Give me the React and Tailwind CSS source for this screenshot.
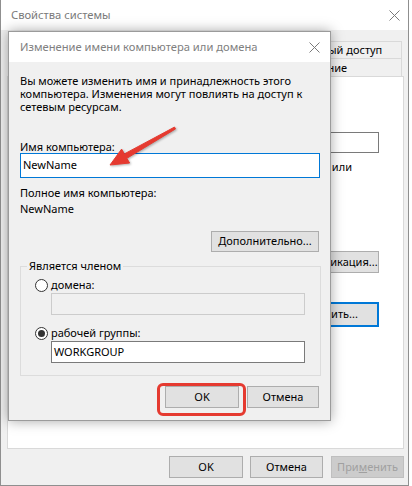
import React from "react";

function XIcon({ className = "" }) {
  return (
    <svg width="11" height="11" viewBox="0 0 11 11" className={className}>
      <path d="M0.5 0.5 L10.5 10.5 M10.5 0.5 L0.5 10.5" stroke="#7a7a7a" strokeWidth="1" fill="none" />
    </svg>
  );
}

function Btn({ className = "", children }) {
  return (
    <div className={"flex items-center justify-center border border-[#adadad] bg-[#e1e1e1] text-black whitespace-nowrap " + className}>
      {children}
    </div>
  );
}

export default function App() {
  return (
    <div className="relative w-[412px] h-[486px] bg-white overflow-hidden font-['Noto_Sans',sans-serif] text-[11px] text-black">
      {/* Outer window */}
      <div className="w-[409px] h-[486px] flex flex-col bg-[#f0f0f0] border-l border-r border-b border-[#8f8f8f]">
        <div className="h-[30px] shrink-0 bg-white flex items-center justify-between pl-[10px] pr-[8px]">
          <span className="text-[11.2px] text-[#7a7a7a] leading-[16px]">Свойства системы</span>
          <XIcon />
        </div>
        <div className="flex flex-col pl-[6px] pr-[4px] pt-[11px]">
          {/* tab rows */}
          <div className="flex justify-end pr-[2px]">
            <div className="w-[256px] h-[17px] border-t border-l border-[#d9d9d9]" />
            <div className="w-[138px] h-[17px] border-t border-l border-r border-[#d9d9d9] flex items-center justify-center leading-[16px]">Удаленный доступ</div>
          </div>
          <div className="flex justify-end pr-[2px]">
            <div className="w-[100px] h-[18px] border-t border-l border-[#d9d9d9]" />
            <div className="w-[106px] h-[18px] border-t border-l border-[#d9d9d9]" />
            <div className="w-[188px] h-[18px] border-t border-l border-r border-[#d9d9d9] flex items-center justify-center leading-[16px]">Оборудование</div>
          </div>
          {/* panel */}
          <div className="h-[373px] border border-[#d9d9d9] bg-white flex flex-col items-end pr-[24px]">
            <div className="mt-[55px] w-[240px] h-[21px] border border-[#7a7a7a]" />
            <div className="mt-[6px] mr-[27px] leading-[16px] whitespace-nowrap">Например: "Компьютер в гостиной" или</div>
            <Btn className="mt-[76px] w-[98px] h-[22px]">Идентификация...</Btn>
            <div className="mt-[29px] w-[104px] h-[25px] flex items-center justify-center border-2 border-[#0078d7] bg-[#e1e1e1]">Изменить...</div>
          </div>
          {/* bottom buttons */}
          <div className="mt-[7px] flex justify-end">
            <Btn className="w-[74px] h-[22px]">OK</Btn>
            <Btn className="ml-[7px] w-[73px] h-[22px]">Отмена</Btn>
            <div className="ml-[8px] w-[73px] h-[22px] flex items-center justify-center border border-[#bfbfbf] bg-[#cccccc] text-[#a0a0a0]">
              <span>При<span className="underline">м</span>енить</span>
            </div>
          </div>
        </div>
      </div>

      {/* Inner dialog */}
      <div className="absolute left-[8px] top-[31px] w-[323px] h-[390px] flex flex-col border border-[#9b9b9b] bg-[#f0f0f0] shadow-[0_0_12px_rgba(0,0,0,0.35)]">
        <div className="h-[30px] shrink-0 bg-white flex items-center justify-between pl-[11px] pr-[10px]">
          <span className="text-[11.2px] text-[#808080] leading-[16px] whitespace-nowrap">Изменение имени компьютера или домена</span>
          <XIcon />
        </div>
        <div className="flex flex-col pl-[11px] pr-[10px] pt-[12px]">
          <p className="leading-[13px] whitespace-nowrap">
            Вы можете изменить имя и принадлежность этого
            <br />
            компьютера. Изменения могут повлиять на доступ к
            <br />
            сетевым ресурсам.
          </p>
          <div className="mt-[27px] leading-[13px]">Имя компьютера:</div>
          <div className="h-[25px] border border-[#0078d7] bg-white flex items-center pl-[2px]">NewName</div>
          <div className="mt-[7px] leading-[16px]">Полное имя компьютера:</div>
          <div className="leading-[16px]">NewName</div>
          <Btn className="mt-[14px] self-end mr-[1px] w-[108px] h-[21px]">Дополнительно...</Btn>
          <fieldset className="mt-[6px] mr-[-1px] border border-[#dcdcdc] pl-[14px] pr-[15px] pt-[3px] pb-[12px]">
            <legend className="ml-[-8px] px-[2px] leading-[16px]">Является членом</legend>
            <div className="flex items-center h-[16px]">
              <span className="w-[13px] h-[13px] rounded-full border border-[#333333] bg-white" />
              <span className="ml-[3px] leading-[16px]">домена:</span>
            </div>
            <div className="ml-[16px] h-[22px] border border-[#cccccc] bg-[#f0f0f0]" />
            <div className="mt-[10px] flex items-center h-[16px]">
              <span className="w-[13px] h-[13px] rounded-full border border-[#333333] bg-white flex items-center justify-center">
                <span className="w-[7px] h-[7px] rounded-full bg-[#333333]" />
              </span>
              <span className="ml-[3px] leading-[16px]">рабочей группы:</span>
            </div>
            <div className="ml-[16px] h-[22px] border border-[#7a7a7a] bg-white flex items-center pl-[2px]">WORKGROUP</div>
          </fieldset>
          <div className="mt-[10px] mr-[1px] flex justify-end">
            <Btn className="w-[74px] h-[22px]">OK</Btn>
            <Btn className="ml-[8px] w-[72px] h-[22px]">Отмена</Btn>
          </div>
        </div>
      </div>

      {/* Red highlight around OK */}
      <div className="absolute left-[157px] top-[383px] w-[89px] h-[33px] border-[3px] border-[#e53a30] rounded-[6px]" />

      {/* Red arrow */}
      <svg className="absolute left-0 top-0 pointer-events-none drop-shadow-[1px_1px_1px_rgba(0,0,0,0.3)]" width="412" height="486" viewBox="0 0 412 486">
        <polygon
          points="110,165 129.6,163 126.8,158.3 175.5,128.9 174.5,127.1 124.4,153.9 121.6,149.1"
          fill="#e53a30"
          stroke="#e53a30"
          strokeWidth="1"
          strokeLinejoin="round"
        />
      </svg>
    </div>
  );
}
